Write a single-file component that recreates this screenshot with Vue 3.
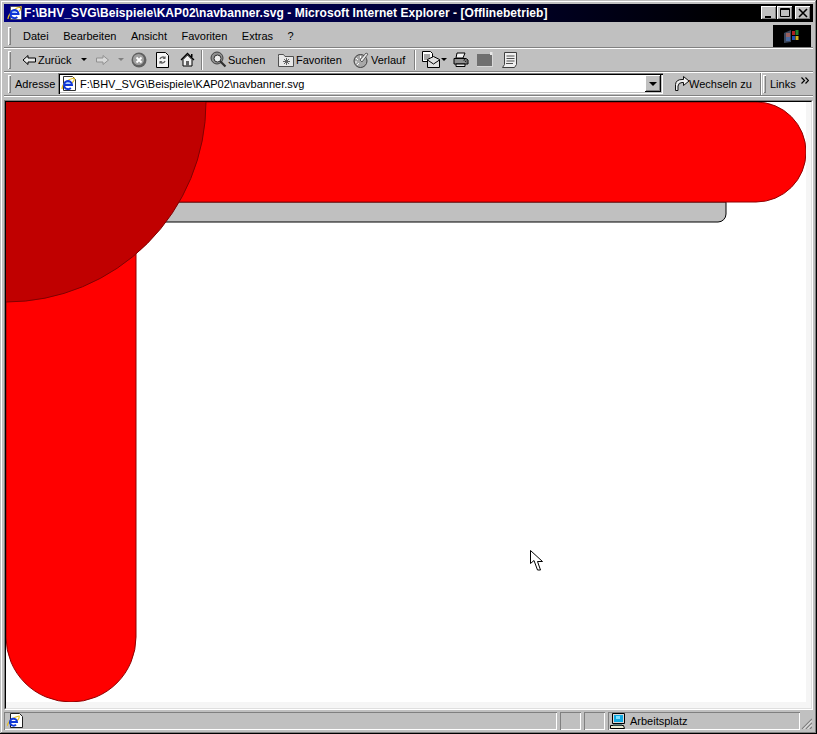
<script setup>
const menus = ['Datei', 'Bearbeiten', 'Ansicht', 'Favoriten', 'Extras', '?']
const url = 'F:\\BHV_SVG\\Beispiele\\KAP02\\navbanner.svg'
const title = url + ' - Microsoft Internet Explorer - [Offlinebetrieb]'
</script>

<template>
  <div class="window">
    <header class="titlebar">
      <svg width="16" height="16" viewBox="0 0 16 16">
        <path d="M3.500 1.500h8l3 3v10h-11z" fill="#fff" stroke="#303030" stroke-width=".6"/>
        <path d="M1 14C1 9 8 3 14 1.500c1 2-1 4-2 5" fill="none" stroke="#e8c020" stroke-width="1.200"/>
        <path d="M3.500 9h8a4 4 0 1 0-1.200 3" fill="none" stroke="#1038d8" stroke-width="2"/>
        <path d="M5 7h4" stroke="#60a0ff"/>
      </svg>
      <span class="title-text">{{ title }}</span>
      <div class="win-btns">
        <button class="wbtn"><svg width="14" height="12" viewBox="0 0 14 12"><path d="M3 9h6v2H3z"/></svg></button>
        <button class="wbtn"><svg width="14" height="12" viewBox="0 0 14 12"><path d="M2.500 1.500h9v8h-9z M2.500 2.500h9" fill="none" stroke="#000"/></svg></button>
        <button class="wbtn close"><svg width="14" height="12" viewBox="0 0 14 12"><path d="M3 2l8 8M11 2l-8 8" stroke="#000" stroke-width="1.600"/></svg></button>
      </div>
    </header>

    <div class="row menu">
      <span class="grip"></span>
      <nav class="menu-items">
        <span v-for="m in menus" :key="m">{{ m }}</span>
      </nav>
      <div class="logo">
        <svg width="18" height="18" viewBox="0 0 18 18">
          <path d="M1 6l7-3v12l-7 1z" fill="#50607c" opacity=".75"/>
          <path d="M3 6h4v4H3z" fill="#986060"/>
          <path d="M3 10h4v4H3z" fill="#4a6aa0"/>
          <path d="M9 4h3v4H9z" fill="#b02020"/>
          <path d="M12.500 3h3v5h-3z" fill="#208030"/>
          <path d="M9 9h3v4H9z" fill="#2050b0"/>
          <path d="M12.500 9h3v4h-3z" fill="#d0b020"/>
        </svg>
      </div>
    </div>

    <div class="row toolbar">
      <span class="grip"></span>
      <svg class="ml11" width="14" height="14" viewBox="0 0 14 14"><path d="M6 2.500L1 7l5 4.500V9h7.500V5H6z" fill="#e8e8e8" stroke="#000"/></svg>
      <span class="label ml2 t-back">Zurück</span>
      <span class="tri"></span>
      <svg class="ml9" width="13" height="14" viewBox="0 0 13 14"><path d="M7 2.500L12.500 7 7 11.500V9H.5V5H7z" fill="#d8d8d8" stroke="#909090"/></svg>
      <span class="tri off ml9"></span>
      <svg class="ml7" width="16" height="16" viewBox="0 0 16 16"><circle cx="8" cy="8" r="7.500" fill="#606060"/><circle cx="7.500" cy="7.500" r="5.500" fill="#a0a0a0"/><path d="M5.500 5.500l5 5M10.500 5.500l-5 5" stroke="#fff" stroke-width="1.800"/></svg>
      <svg class="ml9" width="13" height="16" viewBox="0 0 13 16"><path d="M.5.500h9l3 3v12H.5z" fill="#f4f4f4" stroke="#000"/><path d="M4 7a3 3 0 0 1 5-1M9 9a3 3 0 0 1-5 1" fill="none" stroke="#606060" stroke-width="1.400"/><path d="M9.500 4v3h-3zM3.500 12V9h3z" fill="#606060"/></svg>
      <svg class="ml11" width="15" height="15" viewBox="0 0 15 15"><path d="M1 8l6.500-6.500L14 8" fill="none" stroke="#000" stroke-width="1.300"/><path d="M3 7.500V14h9V7.500L7.500 3z" fill="#f0f0f0" stroke="#000"/><path d="M6 9h3v5H6z" fill="#606060"/><path d="M11 2h1.500v3H11z"/></svg>
      <span class="sep ml6"></span>
      <svg class="ml7" width="17" height="17" viewBox="0 0 17 17"><circle cx="7" cy="7" r="6" fill="#909090" stroke="#404040"/><circle cx="7.500" cy="7.500" r="3.500" fill="#f0f0f0" stroke="#303030"/><path d="M10 10l5.500 5.500" stroke="#303030" stroke-width="2.200"/></svg>
      <span class="label ml1 t-search">Suchen</span>
      <svg class="ml12" width="16" height="14" viewBox="0 0 16 14"><path d="M.5 3.500V1.500h5l1.500 2h8.500v10H.5z" fill="#e8e8e8" stroke="#505050"/><path d="M8.500 5v7M5 8.500h7M6 6l5 5M11 6l-5 5" stroke="#606060"/></svg>
      <span class="label ml2 t-fav">Favoriten</span>
      <svg class="ml12" width="16" height="16" viewBox="0 0 16 16"><circle cx="7.500" cy="9" r="6.500" fill="#a8a8a8" stroke="#404040"/><path d="M3 6l2 2M7.500 4v2M2 10h2M4 13l2-2" stroke="#fff"/><path d="M7 8l6-7 2 1-6 8z" fill="#e8e8e8" stroke="#303030" stroke-width=".7"/></svg>
      <span class="label ml2 t-hist">Verlauf</span>
      <span class="sep ml9"></span>
      <svg class="ml6" width="18" height="17" viewBox="0 0 18 17"><path d="M.5.500h8l2 2v8H.5z" fill="#fff" stroke="#000"/><path d="M2 4h6M2 6h6M2 8h5" stroke="#505050"/><path d="M5.500 8.500l6-3 6 3v8h-12z" fill="#e0e0e0" stroke="#000"/><path d="M5.500 9l6 4 6-4" fill="none" stroke="#000"/></svg>
      <span class="tri ml1"></span>
      <svg class="ml6" width="16" height="15" viewBox="0 0 16 15"><path d="M4 1h8l-2 5H3z" fill="#f4f4f4" stroke="#000"/><path d="M1 6.500h12l2 1.500v4H1z" fill="#909090" stroke="#000"/><path d="M3 12h9v2.500H3z" fill="#e8e8e8" stroke="#000"/><path d="M11 7.500l3 3" stroke="#202020" stroke-dasharray="1 1" stroke-width="2"/></svg>
      <svg class="ml8" width="16" height="15" viewBox="0 0 16 15"><path d="M0 2h16v13H0z" fill="#707070"/><path d="M13 0h2.500v3H13z" fill="#e8e8e8"/><path d="M0 14h16v1H0zM15 2h1v13h-1z" fill="#d8d8d8"/></svg>
      <svg class="ml9" width="15" height="16" viewBox="0 0 15 16"><path d="M2.500.500h12v12l-2 3H.5l2-3z" fill="#f0f0f0" stroke="#404040"/><path d="M4.500 4h8M4.500 6.500h8M4.500 9h8M4 11.500h7" stroke="#505050"/></svg>
    </div>

    <div class="row address">
      <span class="grip"></span>
      <span class="label ml4 t-addr">Adresse</span>
      <div class="addr-box">
        <svg width="16" height="16" viewBox="0 0 16 16">
          <path d="M2.500.500h9l3 3v11h-12z" fill="#fff" stroke="#303030"/>
          <path d="M1 13C1 8 7 3 13 2c1 2-1 4-2 5" fill="none" stroke="#e8c020" stroke-width="1.200"/>
          <path d="M3 9h8a4 4 0 1 0-1.200 3" fill="none" stroke="#1038d8" stroke-width="2"/>
          <path d="M5 7h4" stroke="#60a0ff"/>
        </svg>
        <span class="addr-text">{{ url }}</span>
        <span class="combo"><span class="tri big"></span></span>
      </div>
      <svg class="ml11" width="16" height="17" viewBox="0 0 16 17"><path d="M1.500 15.500V9.500Q2 4.500 8 4.500h1.500V1.500L15 6l-5.500 4.500V7.500H8Q4.500 7.500 4 11v4.500z" fill="#f0f0f0" stroke="#101010"/></svg>
      <span class="label t-go">Wechseln zu</span>
      <span class="sep-thin"></span>
      <span class="grip ml2"></span>
      <span class="label links">Links</span>
      <svg class="chev" width="8" height="7" viewBox="0 0 8 7"><path d="M.5.500l3 3-3 3M4.500.500l3 3-3 3" fill="none" stroke="#000" stroke-width="1.200"/></svg>
    </div>

    <main class="frame">
      <div class="view">
        <svg class="canvas" width="800" height="600" viewBox="0 0 800 600">
          <path d="M0 100H720V112A8 8 0 0 1 712 120H0Z" fill="#c0c0c0" stroke="#000"/>
          <path d="M0 0H130V535A65 65 0 0 1 0 535Z" fill="#f00" stroke="#900000"/>
          <path d="M0 0H750A50 50 0 0 1 750 100H0Z" fill="#f00" stroke="#900000"/>
          <circle cx="0" cy="0" r="200" fill="#c00000" stroke="#800000"/>
          <path d="M524.500 448.500V461.500L528 458.500L531.500 468H534.500L531.500 459.500H536.500Z" fill="#fff" stroke="#000"/>
        </svg>
      </div>
    </main>

    <footer class="status">
      <div class="cell main">
        <svg width="16" height="16" viewBox="0 0 16 16">
          <path d="M3.500.500h9l3 3v11h-12z" fill="#fff" stroke="#202020"/>
          <path d="M0 13C1 8 7 4 12 3c1 2-1 4-2 5" fill="none" stroke="#e8c020" stroke-width="1.200"/>
          <path d="M3 9h7a3.500 3.500 0 1 0-1 2.600" fill="none" stroke="#1038d8" stroke-width="2"/>
        </svg>
      </div>
      <div class="cell small"></div>
      <div class="cell small"></div>
      <div class="cell zone">
        <svg width="16" height="16" viewBox="0 0 16 16">
          <path d="M2.500.500h12v10h-12z" fill="#d8d8d8" stroke="#000"/>
          <path d="M4 2h9v7H4z" fill="#10a8e0"/>
          <path d="M6 3h4v3H6z" fill="#80e0ff"/>
          <path d="M.5 12.500h13l1 3H.5z" fill="#e8e8d0" stroke="#000"/>
          <path d="M3 11h9v1.500H3z" fill="#608080"/>
        </svg>
        <span class="zone-text">Arbeitsplatz</span>
      </div>
      <svg class="resize" width="11" height="11" viewBox="0 0 11 11">
        <path d="M11 1L1 11M11 5L5 11M11 9L9 11" stroke="#808080" stroke-width="1.200"/>
        <path d="M11 2.500L2.500 11M11 6.500L6.500 11" stroke="#fff" stroke-width=".8"/>
      </svg>
    </footer>
  </div>
</template>

<style scoped>
.window {
  box-sizing: border-box;
  width: 817px;
  height: 734px;
  padding: 4px;
  display: flex;
  flex-direction: column;
  background: #c0c0c0;
  box-shadow: inset -1px -1px 0 #000, inset 1px 1px 0 #c0c0c0, inset -2px -2px 0 #808080, inset 2px 2px 0 #fff;
  font: 11px "Liberation Sans", Arial, sans-serif;
  color: #000;
  overflow: hidden;
}
svg { display: block; flex: none; }
.titlebar {
  height: 18px;
  flex: none;
  display: flex;
  align-items: center;
  padding: 0 2px 0 3px;
  background: linear-gradient(90deg, #000080, #000 90%);
  color: #fff;
}
.title-text {
  margin-left: 1px;
  font-weight: bold;
  font-size: 12px;
  letter-spacing: .06px;
  white-space: nowrap;
}
.win-btns { margin-left: auto; display: flex; }
.wbtn {
  width: 16px;
  height: 14px;
  padding: 0;
  border: 0;
  background: #c0c0c0;
  box-shadow: inset -1px -1px 0 #000, inset 1px 1px 0 #fff, inset -2px -2px 0 #808080;
  display: flex;
  align-items: center;
  justify-content: center;
}
.wbtn.close { margin-left: 2px; }
.row {
  flex: none;
  display: flex;
  align-items: center;
  padding-left: 4px;
  border-bottom: 1px solid #808080;
  box-shadow: 0 1px 0 #fff;
  box-sizing: border-box;
}
.menu { height: 26px; padding-top: 2px; }
.toolbar { height: 24px; }
.address { height: 24px; }
.grip {
  width: 3px;
  height: 18px;
  flex: none;
  background: #c0c0c0;
  box-shadow: inset 1px 1px 0 #fff, inset -1px -1px 0 #808080;
}
.menu-items {
  display: flex;
  gap: 14.500px;
  margin-left: 12px;
  flex: 1;
}
.logo {
  width: 38px;
  height: 22px;
  margin-right: 2px;
  background: #000;
  display: flex;
  align-items: center;
  justify-content: center;
}
.label { white-space: nowrap; flex: none; }
.ml1 { margin-left: 1px; }
.ml2 { margin-left: 2px; }
.ml4 { margin-left: 4px; }
.ml6 { margin-left: 6px; }
.ml7 { margin-left: 7px; }
.ml8 { margin-left: 8px; }
.ml9 { margin-left: 9px; }
.ml11 { margin-left: 11px; }
.ml12 { margin-left: 12px; }
.t-addr { width: 39px; }
.t-back { width: 43px; }
.t-search { width: 38px; }
.t-fav { width: 45px; }
.t-hist { width: 34px; }
.t-go { width: 71px; margin-left: -1px; }
.tri {
  width: 0;
  height: 0;
  flex: none;
  border-left: 3px solid transparent;
  border-right: 3px solid transparent;
  border-top: 3px solid #000;
}
.tri.off { border-top-color: #808080; }
.tri.big { border-left-width: 4px; border-right-width: 4px; border-top-width: 4px; }
.sep {
  width: 2px;
  height: 20px;
  flex: none;
  background: linear-gradient(90deg, #808080 50%, #fff 50%);
}
.addr-box {
  box-sizing: border-box;
  width: 605px;
  height: 21px;
  margin-left: 4px;
  padding-left: 3px;
  flex: none;
  display: flex;
  align-items: center;
  background: #fff;
  box-shadow: inset 1px 1px 0 #808080, inset 2px 2px 0 #000, inset -1px -1px 0 #fff, inset -2px -2px 0 #c0c0c0;
}
.addr-text { margin-left: 3px; white-space: nowrap; flex: 1; }
.combo {
  width: 16px;
  height: 17px;
  margin-right: 2px;
  flex: none;
  display: flex;
  align-items: center;
  justify-content: center;
  background: #c0c0c0;
  box-shadow: inset -1px -1px 0 #000, inset 1px 1px 0 #fff, inset -2px -2px 0 #808080;
}
.sep-thin {
  width: 1px;
  height: 22px;
  flex: none;
  background: #808080;
  box-shadow: 1px 0 0 #fff;
}
.links { margin-left: 4px; width: 31px; }
.chev { align-self: flex-start; margin-top: 5px; }
.frame {
  box-sizing: border-box;
  width: 809px;
  height: 610px;
  margin-top: 4px;
  flex: none;
  border: 1px solid;
  border-color: #808080 #fff #fff #808080;
}
.view {
  box-sizing: border-box;
  height: 100%;
  background: #f5f5f5;
  border: 1px solid;
  border-color: #000 #dfdfdf #dfdfdf #000;
  overflow: hidden;
}
.canvas { background: #fff; }
.status {
  height: 18px;
  margin-top: 2px;
  flex: none;
  display: flex;
  gap: 3px;
  position: relative;
}
.cell {
  box-sizing: border-box;
  height: 18px;
  flex: none;
  display: flex;
  align-items: center;
  box-shadow: inset 1px 1px 0 #808080, inset -1px -1px 0 #fff;
}
.main { width: 553px; padding-left: 3px; }
.small { width: 21px; }
.zone { width: 192px; padding-left: 2px; }
.zone-text { margin-left: 4px; }
.resize { position: absolute; right: 1px; bottom: 1px; }
</style>

<style>
html, body { margin: 0; background: #c0c0c0; }
</style>
